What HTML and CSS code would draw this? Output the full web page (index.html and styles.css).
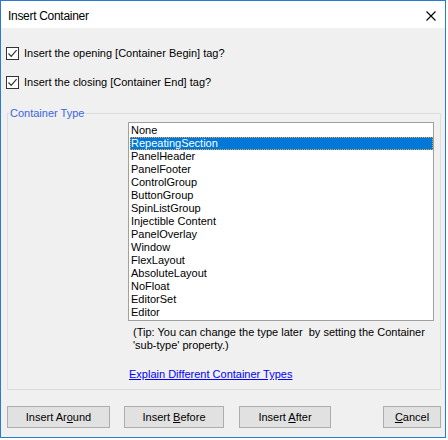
FILE: index.html
```html
<!DOCTYPE html>
<html lang="en">
<head>
    <meta charset="UTF-8">
    <title>Insert Container</title>
    <link rel="stylesheet" href="styles.css">
</head>
<body>
    <div class="window">
        <div class="titlebar">
            <span class="title">Insert Container</span>
            <svg class="close" width="10" height="10" viewBox="0 0 10 10">
                <path d="M0.5 0.5 L9.5 9.5 M9.5 0.5 L0.5 9.5" stroke="#000" stroke-width="1.1" fill="none"/>
            </svg>
        </div>

        <div class="content">
            <label class="check first">
                <span class="box">
                    <svg width="11" height="11" viewBox="0 0 11 11">
                        <path d="M1.5 5.5 L4.2 8.3 L9.6 2.2" stroke="#333" stroke-width="1.2" fill="none"/>
                    </svg>
                </span>
                Insert the opening [Container Begin] tag?
            </label>
            <label class="check">
                <span class="box">
                    <svg width="11" height="11" viewBox="0 0 11 11">
                        <path d="M1.5 5.5 L4.2 8.3 L9.6 2.2" stroke="#333" stroke-width="1.2" fill="none"/>
                    </svg>
                </span>
                Insert the closing [Container End] tag?
            </label>

            <div class="group">
                <div class="legend">Container Type</div>
                <div class="inner">
                    <ul class="listbox">
                        <li>None</li>
                        <li class="selected">RepeatingSection</li>
                        <li>PanelHeader</li>
                        <li>PanelFooter</li>
                        <li>ControlGroup</li>
                        <li>ButtonGroup</li>
                        <li>SpinListGroup</li>
                        <li>Injectible Content</li>
                        <li>PanelOverlay</li>
                        <li>Window</li>
                        <li>FlexLayout</li>
                        <li>AbsoluteLayout</li>
                        <li>NoFloat</li>
                        <li>EditorSet</li>
                        <li>Editor</li>
                    </ul>
                    <p class="tip">(Tip: You can change the type later&nbsp; by setting the Container<br>'sub-type' property.)</p>
                    <a class="explain" href="#">Explain Different Container Types</a>
                </div>
            </div>

            <div class="buttons">
                <button class="btn around">Insert Ar<u>o</u>und</button>
                <button class="btn before">Insert <u>B</u>efore</button>
                <button class="btn after">Insert <u>A</u>fter</button>
                <button class="btn cancel"><u>C</u>ancel</button>
            </div>
        </div>
    </div>
</body>
</html>
```

FILE: styles.css
```css
body {
    margin: 0;
    padding: 0;
    background: #fff;
    font-family: "Liberation Sans", Arial, sans-serif;
    font-size: 11px;
    color: #000;
}
.window {
    width: 446px;
    height: 438px;
    box-sizing: border-box;
    border: 1px solid #2a7ad2;
    display: flex;
    flex-direction: column;
}
.titlebar {
    height: 27px;
    background: #fff;
    display: flex;
    align-items: center;
    justify-content: space-between;
    padding: 0 9px 0 7px;
}
.title {
    font-size: 12px;
    letter-spacing: -0.3px;
    margin-top: 3px;
}
.close {
    margin-top: 3px;
}
.content {
    flex: 1;
    background: #f0f0f0;
    padding: 0 0 0 5px;
}
.check {
    display: flex;
    align-items: center;
    height: 13px;
    line-height: 13px;
    margin-top: 16px;
}
.check.first {
    margin-top: 19px;
}
.box {
    width: 11px;
    height: 11px;
    border: 1px solid #333;
    background: #fff;
    margin-right: 5px;
    display: flex;
}
.group {
    margin: 24px 0 0 1px;
    width: 434px;
    height: 277px;
    box-sizing: border-box;
    border: 1px solid #dcdcdc;
}
.legend {
    width: fit-content;
    margin: -8px 0 0 1px;
    padding: 0 1px;
    height: 15px;
    line-height: 15px;
    background: #f0f0f0;
    color: #3b66e0;
}
.inner {
    padding-left: 120px;
}
.listbox {
    list-style: none;
    margin: 1px 0 0 0;
    padding: 1px 0 1px 1px;
    width: 306px;
    height: 199px;
    box-sizing: border-box;
    border: 1px solid #a0a0a0;
    background: #fff;
}
.listbox li {
    height: 13px;
    line-height: 13px;
    padding-left: 1px;
    white-space: nowrap;
}
.listbox li.selected {
    background: #0078d7;
    color: #fff;
    outline: 1px dotted #f0a040;
    outline-offset: -1px;
}
.tip {
    margin: 5px 0 0 5px;
    line-height: 13px;
    white-space: nowrap;
}
.explain {
    display: inline-block;
    margin: 16px 0 0 1px;
    line-height: 13px;
    color: #0000ff;
}
.buttons {
    display: flex;
    margin: 16px 0 0 1px;
}
.btn {
    height: 22px;
    padding: 0;
    font-family: inherit;
    font-size: 11px;
    color: #000;
    background: #e1e1e1;
    border: 1px solid #adadad;
}
.around {
    width: 103px;
}
.before {
    width: 100px;
    margin-left: 14px;
}
.after {
    width: 92px;
    margin-left: 15px;
}
.cancel {
    width: 58px;
    margin-left: 52px;
}
```
